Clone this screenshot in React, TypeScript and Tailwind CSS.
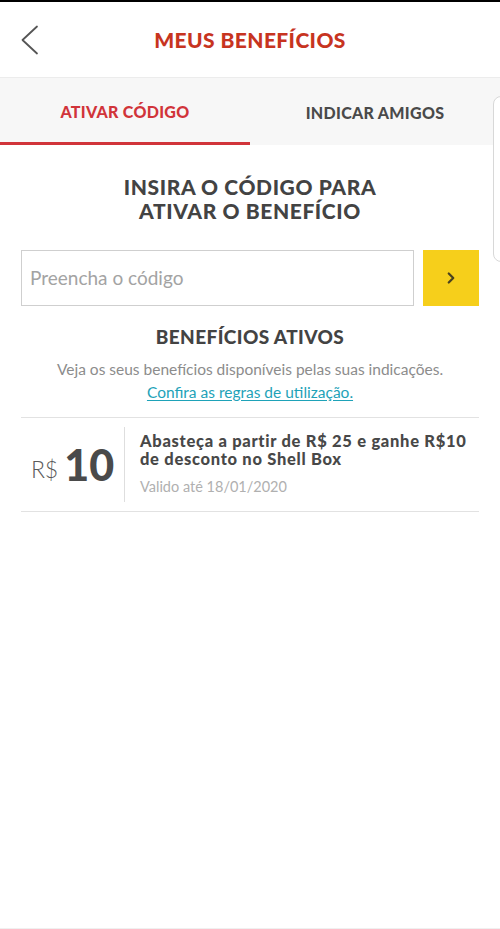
import { ChevronRight } from "lucide-react";

const font = { fontFamily: "Lato, 'Open Sans', sans-serif" };

export default function App() {
  return (
    <div className="relative flex h-[929px] w-[500px] flex-col overflow-hidden bg-white" style={font}>
      <div className="h-[2px] bg-black" />

      {/* header */}
      <header className="relative flex h-[76px] items-center justify-center border-b border-[#ececec]">
        <button className="absolute left-[20px] top-[23px] text-[#555]">
          <svg width="20" height="30" viewBox="0 0 20 30" fill="none" stroke="currentColor" strokeWidth="1.8" strokeLinecap="round" strokeLinejoin="round">
            <polyline points="17,1.5 2.5,15 17,28.5" />
          </svg>
        </button>
        <h1 className="text-[21px] font-black tracking-[0.4px] text-[#c7341f]">MEUS BENEFÍCIOS</h1>
      </header>

      {/* tabs */}
      <nav className="flex h-[67px] bg-[#f7f7f7]">
        <div className="flex w-1/2 flex-col">
          <div className="flex flex-1 items-center justify-center pt-[3px] text-[16px] font-black tracking-[0.3px] text-[#d1343a]">ATIVAR CÓDIGO</div>
          <div className="h-[3px] bg-[#d1343a]" />
        </div>
        <div className="flex w-1/2 items-center justify-center pt-[2px] text-[16px] font-black tracking-[0.3px] text-[#4a4a4a]">INDICAR AMIGOS</div>
      </nav>

      {/* floating edge panel */}
      <div className="absolute left-[493px] top-[96px] h-[166px] w-[20px] rounded-l-[8px] border border-[#d8d8d8] bg-white" />

      <main className="flex flex-col px-[21px]">
        <h2 className="mt-[30px] text-center text-[21px] font-black leading-[24px] tracking-[0.6px] text-[#434343]">
          INSIRA O CÓDIGO PARA
          <br />
          ATIVAR O BENEFÍCIO
        </h2>

        <div className="mt-[27px] flex gap-[9px]">
          <div className="flex h-[56px] flex-1 items-center border border-[#cfcfcf] px-[8px] text-[19px] text-[#a3a3a3]">
            Preencha o código
          </div>
          <button className="flex h-[56px] w-[56px] items-center justify-center bg-[#f6cf1b] text-[#4a4220]">
            <ChevronRight size={18} strokeWidth={3} />
          </button>
        </div>

        <h3 className="mt-[17px] text-center text-[19px] font-black tracking-[0.4px] text-[#434343]">BENEFÍCIOS ATIVOS</h3>
        <p className="mt-[6px] text-center text-[15.5px] leading-[23px] text-[#8c8c8c]">
          Veja os seus benefícios disponíveis pelas suas indicações.
        </p>
        <a className="text-center text-[15.5px] leading-[23px] text-[#1ea2b8] underline underline-offset-2">
          Confira as regras de utilização.
        </a>

        <div className="mt-[13px] flex items-stretch border-y border-[#e2e2e2] py-[9px]">
          <div className="flex w-[103px] shrink-0 items-center justify-center gap-[6px] text-[#4a4a4a]">
            <span className="mt-[9px] text-[23px] font-light text-[#5a5a5a]">R$</span>
            <span className="text-[43px] font-black leading-none">10</span>
          </div>
          <div className="w-px shrink-0 bg-[#dedede]" />
          <div className="flex flex-col pl-[15px] pt-[5px] pb-[5px]">
            <p className="text-[16.5px] font-black leading-[18px] tracking-[0.7px] text-[#484848]">
              Abasteça a partir de R$ 25 e ganhe R$10 de desconto no Shell Box
            </p>
            <p className="mt-[8px] text-[14.5px] text-[#b0b0b0]">Valido até 18/01/2020</p>
          </div>
        </div>
      </main>

      <div className="mt-auto h-px bg-[#f0f0f0]" />
    </div>
  );
}
